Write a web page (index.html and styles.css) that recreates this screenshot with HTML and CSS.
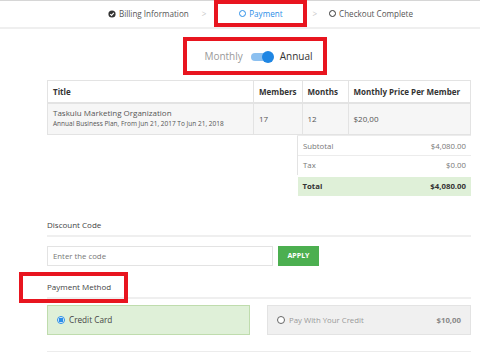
FILE: index.html
```html
<!DOCTYPE html>
<html lang="en">
<head>
    <meta charset="UTF-8">
    <title>Checkout - Payment</title>
    <link rel="stylesheet" href="styles.css">
</head>
<body>
    <nav class="steps">
        <div class="step done">
            <svg class="step-icon" viewBox="0 0 10 10"><circle cx="5" cy="5" r="4.5" fill="#333"/><path d="M2.8 5.2 L4.4 6.7 L7.3 3.5" fill="none" stroke="#fff" stroke-width="1.4"/></svg>
            Billing Information
        </div>
        <span class="sep">&gt;</span>
        <div class="step active mark">
            <span class="ring"></span>
            Payment
        </div>
        <span class="sep sep-right">&gt;</span>
        <div class="step">
            <span class="ring dark"></span>
            Checkout Complete
        </div>
    </nav>

    <div class="container">
        <div class="billing-toggle mark">
            <span class="off">Monthly</span>
            <span class="switch"><span class="knob"></span></span>
            <span class="on">Annual</span>
        </div>

        <table class="plan-table">
            <thead>
                <tr>
                    <th class="col-title">Title</th>
                    <th class="col-members">Members</th>
                    <th class="col-months">Months</th>
                    <th>Monthly Price Per Member</th>
                </tr>
            </thead>
            <tbody>
                <tr>
                    <td>
                        <div class="plan-name">Taskulu Marketing Organization</div>
                        <div class="plan-desc">Annual Business Plan, From Jun 21, 2017 To Jun 21, 2018</div>
                    </td>
                    <td>17</td>
                    <td>12</td>
                    <td>$20,00</td>
                </tr>
            </tbody>
        </table>

        <table class="summary">
            <tr><td>Subtotal</td><td class="amount">$4,080.00</td></tr>
            <tr><td>Tax</td><td class="amount">$0.00</td></tr>
            <tr class="total"><td>Total</td><td class="amount">$4,080.00</td></tr>
        </table>

        <h4 class="section-title">Discount Code</h4>
        <form class="discount">
            <input type="text" placeholder="Enter the code">
            <button type="button" class="btn-apply">APPLY</button>
        </form>

        <div class="method-head">
            <h4 class="section-title">Payment Method</h4>
            <span class="mark method-mark"></span>
        </div>
        <div class="methods">
            <div class="method selected">
                <span class="radio checked"></span>
                Credit Card
            </div>
            <div class="method">
                <span class="radio"></span>
                Pay With Your Credit
                <span class="credit">$10,00</span>
            </div>
        </div>
        <div class="bottom-line"></div>
    </div>
</body>
</html>
```

FILE: styles.css
```css
* { margin: 0; padding: 0; box-sizing: border-box; }

body {
    font-family: "Open Sans", "Liberation Sans", sans-serif;
    background: #fff;
    color: #555;
    width: 480px;
    height: 360px;
    overflow: hidden;
}

/* red annotation frames */
.mark { border: 4px solid #e8151f; }

/* ---- steps bar ---- */
.steps {
    display: flex;
    align-items: center;
    height: 29px;
    padding-left: 108px;
    box-shadow: inset 0 1px #d6d6d6;
    border-bottom: 2px solid #efefef;
    font-size: 8.1px;
    color: #555;
}

.step {
    display: flex;
    align-items: center;
    gap: 3px;
}

.step-icon { width: 8px; height: 8px; }

.step.active {
    align-self: flex-start;
    height: 27px;
    width: 93px;
    justify-content: center;
    color: #2a8ee8;
    background: #fff;
}

.ring {
    width: 7px;
    height: 7px;
    border: 1.3px solid #2a8ee8;
    border-radius: 50%;
}

.ring.dark { border-color: #333; }

.sep {
    color: #c8c8c8;
    margin: 0 8px 0 13px;
}

.sep-right { margin: 0 12px 0 5px; }

/* ---- content ---- */
.container {
    padding: 0 9px 0 47px;
}

.billing-toggle {
    display: flex;
    align-items: center;
    justify-content: center;
    width: 144px;
    height: 38px;
    margin: 8px 0 5px 136px;
    padding-left: 7px;
    font-size: 10px;
}

.billing-toggle .off { color: #9a9a9a; }
.billing-toggle .on { color: #333; }

.switch {
    position: relative;
    width: 20px;
    height: 8px;
    margin: 2px 9px 0 8px;
    border-radius: 4px;
    background: #8cc0f0;
}

.knob {
    position: absolute;
    right: -3px;
    top: -2px;
    width: 12px;
    height: 12px;
    border-radius: 50%;
    background: #1f86e3;
}

.plan-table {
    width: 100%;
    border-collapse: collapse;
    border: 1px solid #e3e3e3;
    font-size: 8px;
}

.plan-table th,
.plan-table td {
    text-align: left;
    padding: 0 5px;
    border-left: 1px solid #e3e3e3;
}

.plan-table th {
    height: 22px;
    font-weight: 700;
    color: #333;
    border-bottom: 2px solid #e3e3e3;
}

.plan-table td {
    height: 32px;
    background: #f6f6f6;
    color: #555;
}

.col-title { width: 206px; }
.col-members { width: 44px; }
.col-months { width: 46px; }

.plan-name { font-size: 8px; line-height: 11px; margin-top: -2px; }
.plan-desc { font-size: 6.5px; line-height: 11px; }

.summary {
    width: 174px;
    margin-left: 250px;
    border-collapse: collapse;
    font-size: 7.8px;
    color: #777;
}

.summary td {
    height: 20px;
    padding: 0 5px;
    border-top: 1px solid #ececec;
}

.summary tr:not(.total) td:first-child { border-left: 1px solid #e3e3e3; }

.summary .amount { text-align: right; }

.summary .total td {
    background: #dff0d8;
    color: #333;
    font-weight: 700;
    border-top: 2px solid #fff;
}

.section-title {
    font-size: 8px;
    font-weight: 400;
    color: #444;
    padding-bottom: 5px;
    border-bottom: 2px solid #efefef;
}

.container > .section-title:first-of-type { margin-top: 23px; }

.discount {
    display: flex;
    gap: 5px;
    margin-top: 9px;
}

.discount input {
    width: 226px;
    height: 20px;
    border: 1px solid #e3e3e3;
    padding: 0 5px;
    font-family: inherit;
    font-size: 7.8px;
}

.discount input::placeholder { color: #777; }

.btn-apply {
    width: 41px;
    height: 20px;
    border: none;
    background: #4caf50;
    color: #fff;
    font-family: inherit;
    font-size: 7px;
    font-weight: 700;
}

.method-head {
    position: relative;
    margin-top: 9px;
}

.method-head .section-title { padding-top: 6px; }

.method-mark {
    position: absolute;
    left: -28px;
    top: -3px;
    width: 109px;
    height: 31px;
}

.methods {
    display: flex;
    justify-content: space-between;
    margin-top: 6px;
}

.method {
    display: flex;
    align-items: center;
    gap: 4px;
    width: 204px;
    height: 30px;
    padding: 0 9px;
    border: 1px solid #e3e3e3;
    background: #f0f0f0;
    color: #999;
    font-size: 7.8px;
}

.method.selected {
    width: 203px;
    background: #dff0d8;
    border-color: #bfdcad;
    color: #444;
    font-size: 8.2px;
}

.radio {
    width: 8px;
    height: 8px;
    border: 1.2px solid #666;
    border-radius: 50%;
    background: #fff;
}

.radio.checked {
    border-color: #2a8ee8;
    background: radial-gradient(circle, #2a8ee8 2.2px, #fff 2.6px);
}

.credit {
    margin-left: auto;
    font-weight: 700;
    color: #888;
}

.bottom-line {
    margin-top: 16px;
    border-top: 1px solid #ececec;
}
```
